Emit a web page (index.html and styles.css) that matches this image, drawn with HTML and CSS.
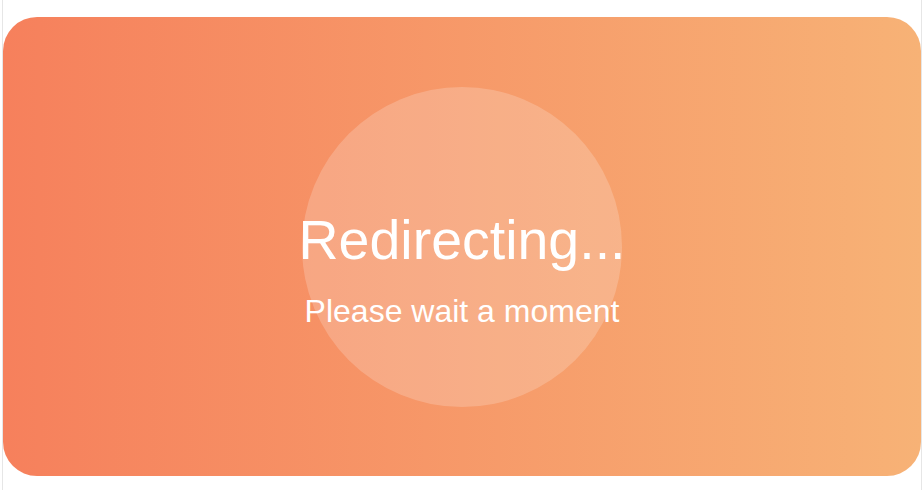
FILE: index.html
```html
<!DOCTYPE html>
<html lang="en">
<head>
<meta charset="utf-8">
<title>Redirecting</title>
<link rel="stylesheet" href="styles.css">
</head>
<body>
<div class="frame">
  <main class="card">
    <div class="glow"></div>
    <div class="content">
      <h1 class="title">Redirecting...</h1>
      <p class="subtitle">Please wait a moment</p>
    </div>
  </main>
</div>
</body>
</html>
```
FILE: styles.css
```css
html, body {
  margin: 0;
  padding: 0;
  height: 100%;
  background: #ffffff;
}
.frame {
  box-sizing: border-box;
  height: 490px;
  margin: 0 1px 0 2px;
  border-left: 1px solid #e6e6e6;
  border-right: 1px solid #e6e6e6;
  padding-top: 17px;
}
.card {
  position: relative;
  height: 459px;
  border-radius: 34px;
  background: linear-gradient(90deg, #f6805c 0%, #f7b276 100%);
  display: flex;
  align-items: center;
  justify-content: center;
  overflow: hidden;
  font-family: "Liberation Sans", Arial, sans-serif;
  color: #ffffff;
}
.glow {
  position: absolute;
  left: 50%;
  top: 50%;
  width: 320px;
  height: 320px;
  margin: -160px 0 0 -160px;
  border-radius: 50%;
  background: rgba(255, 255, 255, 0.2);
}
.content {
  position: relative;
  text-align: center;
  padding-top: 44px;
}
.title {
  margin: 0;
  font-size: 55.5px;
  font-weight: normal;
  line-height: 1.2;
}
.subtitle {
  margin: 19px 0 0;
  font-size: 32px;
  line-height: 1.2;
}
```
